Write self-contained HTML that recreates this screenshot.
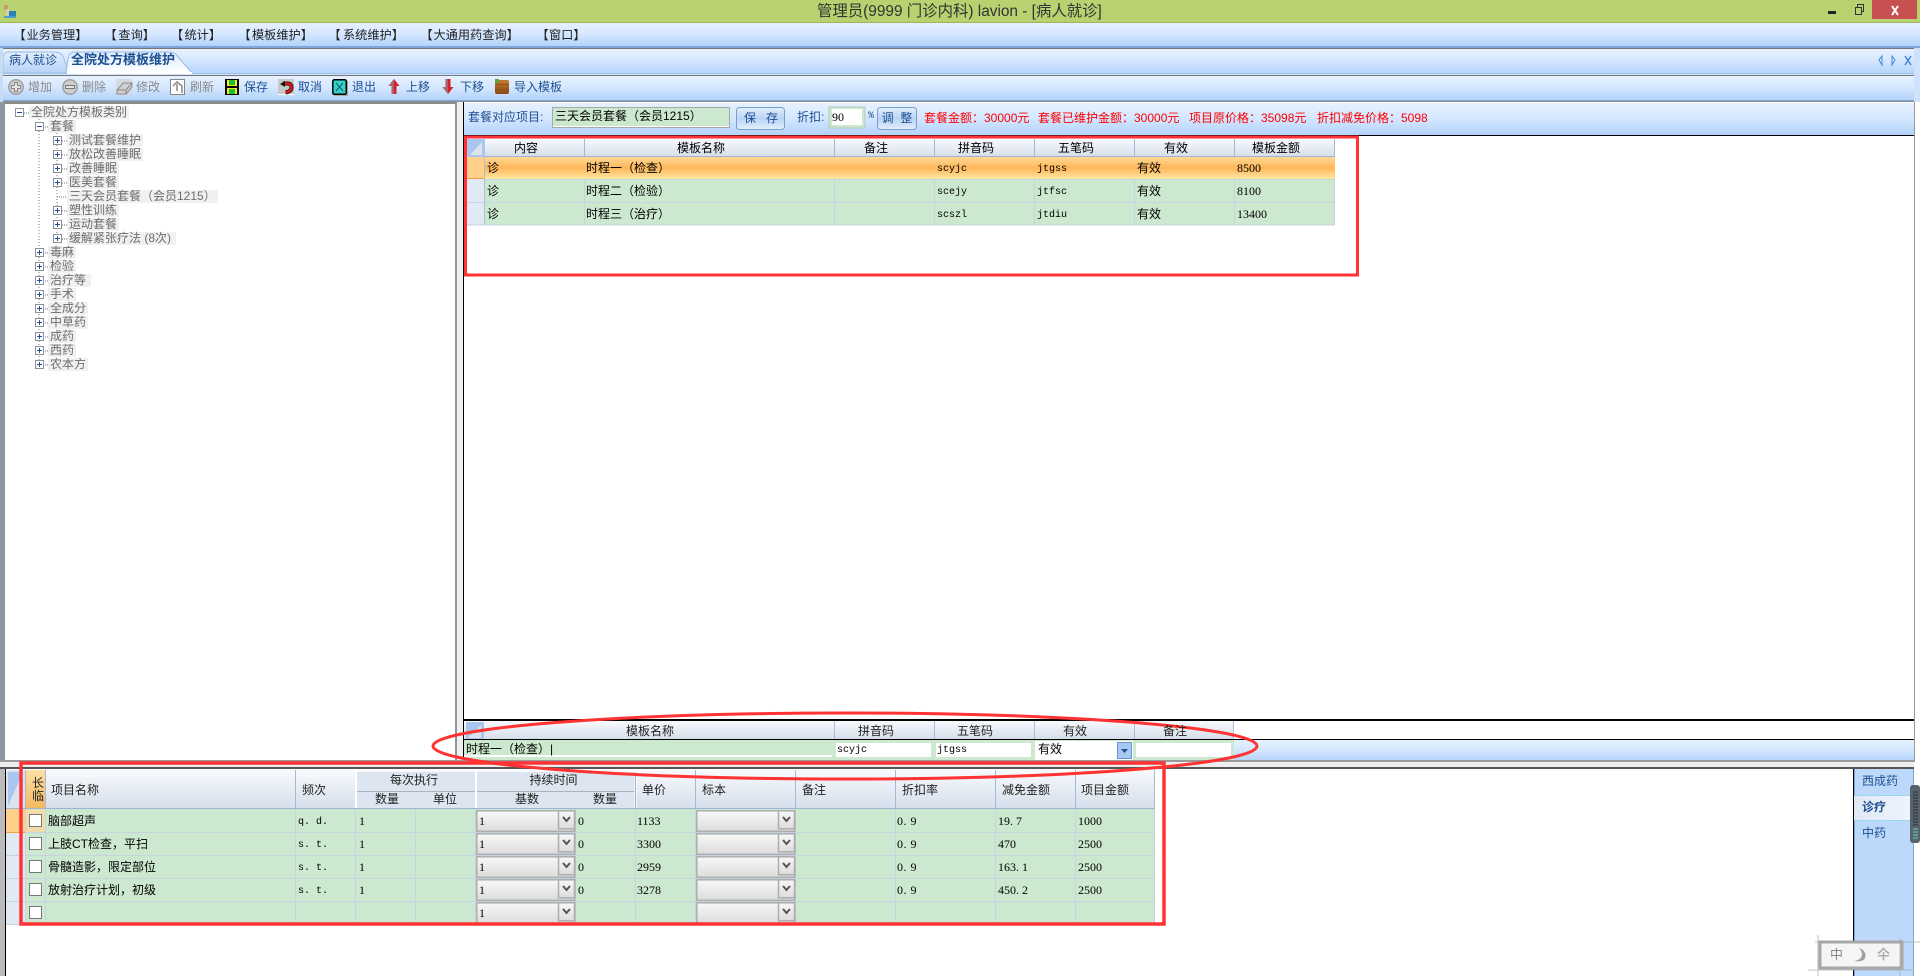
<!DOCTYPE html>
<html lang="zh"><head><meta charset="utf-8"><title>管理员</title>
<style>
html,body{margin:0;padding:0;width:1920px;height:976px;overflow:hidden;background:#fff}
svg{position:absolute;left:0;top:0}
.t{position:absolute;white-space:nowrap;font:12px/14px "Liberation Sans","WenQuanYi Zen Hei","Noto Sans CJK SC",sans-serif;color:#000}
.c{text-align:center}
.b{color:#1d4f91}.g{color:#8a8a8a}.r{color:#f00}.k{color:#222}
.l{color:#6e6e6e;background:#f0f0f0;padding:0 2px;line-height:13px}
.m{font:10px/14px "Liberation Mono",monospace}
.n{font:12px/14px "Liberation Serif",serif}
.mn{font-size:12.200px;top:28px}
</style></head><body>
<svg width="1920" height="976" viewBox="0 0 1920 976">
<defs>
<linearGradient id="bar" x1="0" y1="0" x2="0" y2="1"><stop offset="0" stop-color="#e6f1ff"/><stop offset=".45" stop-color="#d6e8ff"/><stop offset="1" stop-color="#b3d3fb"/></linearGradient>
<linearGradient id="hdr" x1="0" y1="0" x2="0" y2="1"><stop offset="0" stop-color="#f8fafc"/><stop offset="1" stop-color="#d5deeb"/></linearGradient>
<linearGradient id="sel" x1="0" y1="0" x2="0" y2="1"><stop offset="0" stop-color="#fdd995"/><stop offset=".5" stop-color="#ffb65a"/><stop offset="1" stop-color="#ffe8a2"/></linearGradient>
<linearGradient id="org" x1="0" y1="0" x2="0" y2="1"><stop offset="0" stop-color="#fde0a4"/><stop offset="1" stop-color="#f3b95f"/></linearGradient>
<linearGradient id="cmb" x1="0" y1="0" x2="0" y2="1"><stop offset="0" stop-color="#f8f8f8"/><stop offset="1" stop-color="#dcdcdc"/></linearGradient>
<linearGradient id="btn" x1="0" y1="0" x2="0" y2="1"><stop offset="0" stop-color="#e4effd"/><stop offset=".5" stop-color="#b8d4f6"/><stop offset="1" stop-color="#e4effd"/></linearGradient>
<linearGradient id="tabA" x1="0" y1="0" x2="0" y2="1"><stop offset="0" stop-color="#dcebff"/><stop offset="1" stop-color="#fff"/></linearGradient>
<linearGradient id="tabI" x1="0" y1="0" x2="0" y2="1"><stop offset="0" stop-color="#e3eefc"/><stop offset="1" stop-color="#b6d3f8"/></linearGradient>
<linearGradient id="act" x1="0" y1="0" x2="1" y2="0"><stop offset="0" stop-color="#dfe9f6"/><stop offset="1" stop-color="#eef4fc"/></linearGradient>
<linearGradient id="brn" x1="0" y1="0" x2="0" y2="1"><stop offset="0" stop-color="#c77a2c"/><stop offset="1" stop-color="#8a4a16"/></linearGradient>
</defs>
<!-- title -->
<rect width="1920" height="22" fill="#b8d26f"/><rect y="22" width="1920" height="1" fill="#9db55c"/>
<rect x="1872" width="45" height="19" fill="#c75050"/>
<rect x="1828" y="11" width="8" height="3" fill="#222"/>
<path d="M1855.500 7.500h6v7h-6zM1857.500 7v-2.500h6v7h-2" fill="none" stroke="#333"/>
<path d="M1892 6l6 9M1898 6l-6 9" stroke="#fff" stroke-width="2"/>
<rect x="4" y="5" width="4" height="5" fill="#c89a70"/><rect x="6" y="9" width="3" height="8" fill="#e0c8b0"/><rect x="9" y="11" width="7" height="6" fill="#2a7fb5"/><rect x="4" y="16" width="12" height="2" fill="#4aa0c8"/>
<!-- menu -->
<rect y="23" width="1920" height="23" fill="url(#bar)"/><rect y="46" width="1920" height="2" fill="#7ea7d8"/>
<!-- tabs strip -->
<rect y="48" width="1920" height="54" fill="#cfe2fb"/>
<rect x="1" y="48" width="1913" height="1" fill="#777"/>
<rect x="2" y="49" width="1912" height="25" fill="url(#bar)"/>
<path d="M3 73V58q0-6 6-6h46q5 0 8 4l6 17z" fill="url(#tabI)" stroke="#9dbbe0"/>
<path d="M66 73l2-14q1-7 7-7h95q5 0 8 5l14 16z" fill="url(#tabA)" stroke="#9dbbe0"/>
<rect x="2" y="73" width="1912" height="1" fill="#a5c3e8"/>
<rect x="67" y="72" width="125" height="2" fill="#fff"/>
<path d="M1882 56l-3 4 3 5zM1892 56l3 4-3 5z" fill="none" stroke="#3f87d6"/>
<path d="M1905 56l6 9M1911 56l-6 9" stroke="#3f87d6" stroke-width="1.500"/>
<!-- toolbar -->
<rect x="3" y="75" width="1911" height="1" fill="#777"/>
<rect x="3" y="76" width="1911" height="24" fill="url(#bar)"/>
<rect x="3" y="100" width="1911" height="1" fill="#7ea7d8"/><rect x="3" y="101" width="1911" height="1" fill="#8e8e8e"/>
<rect x="0" y="48" width="3" height="54" fill="#c8dcf6"/>
<g>
<circle cx="16" cy="87" r="7.200" fill="#cfcfcf" stroke="#a0a0a0" stroke-width="1.500"/><path d="M14.500 82.500h3v3h3v3h-3v3h-3v-3h-3v-3h3z" fill="#e4e4e4" stroke="#888"/>
<circle cx="70" cy="87" r="7.200" fill="#cfcfcf" stroke="#a0a0a0" stroke-width="1.500"/><rect x="65.500" y="85.500" width="9" height="3" fill="#e4e4e4" stroke="#777"/>
<rect x="116" y="79" width="16" height="16" fill="#d3d9e1"/><path d="M117 94v-4l6-7h9v4l-6 7z" fill="#cfcfcf" stroke="#888"/><path d="M117 90h9l6-7M126 90v4" fill="none" stroke="#888"/>
<rect x="170.500" y="79.500" width="14" height="15" fill="#fff" stroke="#888"/><path d="M173 86l4-4 5 4v7M177 84v7" fill="none" stroke="#888" stroke-width="1.500"/>
<rect x="225" y="79" width="14" height="16" fill="#000"/><rect x="227" y="80" width="10" height="14" fill="#f6f01e"/><rect x="229" y="80" width="6" height="5" fill="#1fbb3c"/><rect x="229" y="89" width="6" height="5" fill="#1fbb3c"/><rect x="227" y="86" width="10" height="2" fill="#000"/>
<rect x="278" y="79" width="16" height="15" fill="#c9c9c9"/><rect x="278" y="94" width="16" height="1" fill="#fff"/><path d="M283 83.500h4q4.500 0 4.500 4t-6 5" fill="none" stroke="#111" stroke-width="4"/><path d="M283 83.500h4q4.500 0 4.500 4t-6 5" fill="none" stroke="#e0161d" stroke-width="2.500"/><path d="M280 84l5-3v6z" fill="#111"/>
<rect x="334" y="81" width="14" height="15" fill="#aaa"/><rect x="332.800" y="79.800" width="13.500" height="14.500" rx="1.500" fill="#36d2c9" stroke="#000" stroke-width="1.500"/><path d="M336 83l7 8M343 83l-7 8" stroke="#0b5a6a"/>
<path d="M394 79l5.500 7h-3v8h-5v-8h-3z" fill="#cf2229"/><path d="M394 79l-5.500 7h3v8h2.500z" fill="#a9646a"/>
<path d="M448 94l5.500-7h-3v-8h-5v8h-3z" fill="#cf2229"/><path d="M448 94l-5.500-7h3v-8h2.500z" fill="#a9646a"/>
<rect x="495" y="80" width="14" height="14" rx="2" fill="url(#brn)"/><rect x="495" y="84" width="14" height="1" fill="#7a4215" opacity=".6"/><rect x="495" y="89" width="14" height="1" fill="#7a4215" opacity=".6"/><rect x="495" y="79" width="4" height="4" fill="#53a83a"/>
</g>
<!-- tree panel -->
<rect x="0" y="102" width="5" height="660" fill="#8d96a3"/>
<rect x="5" y="102" width="450" height="2" fill="#8a8a8a"/>
<rect x="455" y="102" width="2" height="660" fill="#8f95a0"/><rect x="457" y="102" width="6" height="660" fill="#efefef"/>
<path d="M39 119V365M57 133V225" stroke="#777" stroke-dasharray="1 2" fill="none"/>
<path d="M24 113h5M43 127h5M43 253h5M43 267h5M43 281h5M43 295h5M43 309h5M43 323h5M43 337h5M43 351h5M43 365h5M62 141h6M62 155h6M62 169h6M62 183h6M57 197h11M62 211h6M62 225h6M62 239h6" stroke="#777" stroke-dasharray="1 1" fill="none"/>
<path d="M57 232v7" stroke="#777" stroke-dasharray="1 2"/>
<g fill="#fff" stroke="#8b8f98">
<rect x="15.500" y="108.500" width="8" height="8"/><rect x="35.500" y="122.500" width="8" height="8"/>
<rect x="53.500" y="136.500" width="8" height="8"/><rect x="53.500" y="150.500" width="8" height="8"/><rect x="53.500" y="164.500" width="8" height="8"/><rect x="53.500" y="178.500" width="8" height="8"/><rect x="53.500" y="206.500" width="8" height="8"/><rect x="53.500" y="220.500" width="8" height="8"/><rect x="53.500" y="234.500" width="8" height="8"/>
<rect x="35.500" y="248.500" width="8" height="8"/><rect x="35.500" y="262.500" width="8" height="8"/><rect x="35.500" y="276.500" width="8" height="8"/><rect x="35.500" y="290.500" width="8" height="8"/><rect x="35.500" y="304.500" width="8" height="8"/><rect x="35.500" y="318.500" width="8" height="8"/><rect x="35.500" y="332.500" width="8" height="8"/><rect x="35.500" y="346.500" width="8" height="8"/><rect x="35.500" y="360.500" width="8" height="8"/>
</g>
<path d="M17 112.500h5M37 126.500h5M55 140.500h5M57.500 138v5M55 154.500h5M57.500 152v5M55 168.500h5M57.500 166v5M55 182.500h5M57.500 180v5M55 210.500h5M57.500 208v5M55 224.500h5M57.500 222v5M55 238.500h5M57.500 236v5M37 252.500h5M39.500 250v5M37 266.500h5M39.500 264v5M37 280.500h5M39.500 278v5M37 294.500h5M39.500 292v5M37 308.500h5M39.500 306v5M37 322.500h5M39.500 320v5M37 336.500h5M39.500 334v5M37 350.500h5M39.500 348v5M37 364.500h5M39.500 362v5" stroke="#2c4a9a" fill="none"/>
<!-- right panel -->
<rect x="463" y="102" width="1" height="660" fill="#000"/>
<rect x="1914" y="102" width="1" height="660" fill="#9a9a9a"/>
<rect x="464" y="103" width="1450" height="32" fill="url(#bar)"/><rect x="464" y="135" width="1450" height="1" fill="#000"/>
<rect x="552.500" y="107.500" width="177" height="20" fill="#cce8cf" stroke="#a8a8a8"/><rect x="553" y="126" width="176" height="1" fill="#fff"/>
<rect x="736.500" y="107.500" width="48" height="22" rx="3" fill="url(#btn)" stroke="#7d9ec8"/>
<rect x="829" y="107" width="36" height="21" fill="#cce8cf" stroke="#b8c8b8"/><rect x="832" y="109" width="30" height="16" fill="#fff"/>
<rect x="877.500" y="107.500" width="39" height="22" rx="3" fill="url(#btn)" stroke="#7d9ec8"/>
<!-- top grid -->
<rect x="467" y="139" width="868" height="18" fill="url(#hdr)"/><rect x="467" y="156" width="868" height="1" fill="#9db4d2"/>
<rect x="467" y="139" width="18" height="18" fill="#a9c6ee"/><path d="M470 155l12-13v13z" fill="#dde3ea"/>
<rect x="485" y="179" width="850" height="46" fill="#cce8cf"/>
<path d="M584.500 179v46M834.500 179v46M934.500 179v46M1034.500 179v46M1134.500 179v46M1234.500 179v46M1334.500 179v46" stroke="#c6d3e2"/>
<rect x="485" y="157" width="850" height="22" fill="url(#sel)"/>
<rect x="467" y="157" width="18" height="22" fill="#ffd08a"/><rect x="467" y="179" width="18" height="46" fill="#e1e9f5"/>
<path d="M467 178.500h18" stroke="#f0a33d"/><path d="M484.500 157v68" stroke="#a9bfdc"/>
<path d="M485 179.500h850M485 202.500h850M467 225h868M467 202.500h18" stroke="#c6d3e2"/>
<path d="M584.500 139v18M834.500 139v18M934.500 139v18M1034.500 139v18M1134.500 139v18M1234.500 139v18M1334.500 139v18" stroke="#a3b9d5"/>
<!-- edit grid -->
<rect x="464" y="719" width="1450" height="2" fill="#000"/>
<rect x="464" y="721" width="770" height="18" fill="url(#hdr)"/>
<rect x="466" y="722" width="18" height="17" fill="#a9c6ee"/><path d="M468 738l13-13v13z" fill="#dde3ea"/>
<path d="M834.500 721v18M934.500 721v18M1034.500 721v18M1134.500 721v18M1233.500 721v18" stroke="#a9bdd7"/>
<rect x="464" y="739" width="1450" height="1" fill="#000"/>
<rect x="464" y="740" width="1450" height="21" fill="url(#bar)"/>
<rect x="464" y="740" width="770" height="21" fill="#cce8cf"/>
<rect x="464" y="755" width="368" height="2" fill="#fff"/>
<rect x="836" y="743" width="95" height="14" fill="#fff"/><rect x="936" y="743" width="95" height="14" fill="#fff"/>
<rect x="1035" y="741" width="98" height="19" fill="#fff"/><rect x="1117.500" y="742.500" width="14" height="16" fill="#a7c8f2" stroke="#6a90c8"/><path d="M1121 749h7l-3.500 4z" fill="#1d4f91"/>
<rect x="1136" y="743" width="95" height="14" fill="#fff"/>
<!-- splitter -->
<rect x="0" y="760" width="1914" height="2" fill="#9a9a9a"/><rect x="0" y="762" width="1914" height="6" fill="#eee"/><rect x="0" y="767" width="1914" height="2" fill="#555"/>
<rect x="0" y="769" width="5" height="207" fill="#bbb"/><rect x="5" y="769" width="1" height="207" fill="#000"/>
<!-- bottom grid -->
<rect x="6" y="770" width="1149" height="39" fill="url(#hdr)"/>
<rect x="6" y="770" width="19" height="39" fill="#dde3ee"/><path d="M8 806V772h15z" fill="#a9c6ee"/>
<rect x="25" y="770" width="21" height="39" fill="url(#org)"/>
<rect x="357" y="772" width="118" height="36" fill="#dde5f0"/><rect x="477" y="772" width="158" height="36" fill="#dde5f0"/>
<path d="M357 791.500h118M477 791.500h158" stroke="#a8b4c4"/>
<path d="M356 770v39M476 770v39M635.500 770v39" stroke="#fff" stroke-width="2"/>
<rect x="6" y="808" width="1149" height="1" fill="#9db4d2"/>
<rect x="25" y="809" width="1130" height="116" fill="#cce8cf"/>
<rect x="6" y="809" width="19" height="116" fill="#e1e9f5"/>
<rect x="6" y="809" width="19" height="23" fill="#ffd08a"/><path d="M6 832.500h19" stroke="#f0a33d"/>
<rect x="25" y="809" width="21" height="23" fill="#fbd9a0" opacity=".8"/>
<path d="M25 832.500h1130M25 855.500h1130M25 878.500h1130M25 901.500h1130M6 924.500h1149M6 855.500h19M6 878.500h19M6 901.500h19" stroke="#c6d3e2"/>
<path d="M25.500 809v116M45.500 809v116M295.500 809v116M355.500 809v116M415.500 809v116M475.500 809v116M575.500 809v116M635.500 809v116M695.500 809v116M795.500 809v116M895.500 809v116M995.500 809v116M1075.500 809v116M1154.500 809v116" stroke="#c6d3e2"/>
<path d="M25.500 770v39M45.500 770v39M295.500 770v39M635.500 772v37M695.500 770v39M795.500 770v39M895.500 770v39M995.500 770v39M1075.500 770v39M1154.500 770v39" stroke="#a3b9d5"/>
<g fill="#fff" stroke="#777"><rect x="29.500" y="814.500" width="12" height="12"/><rect x="29.500" y="837.500" width="12" height="12"/><rect x="29.500" y="860.500" width="12" height="12"/><rect x="29.500" y="883.500" width="12" height="12"/><rect x="29.500" y="906.500" width="12" height="12"/></g>
<g fill="url(#cmb)" stroke="#adadad" stroke-width="1.500">
<rect x="476.800" y="810.800" width="98" height="20.500"/><rect x="476.800" y="833.800" width="98" height="20.500"/><rect x="476.800" y="856.800" width="98" height="20.500"/><rect x="476.800" y="879.800" width="98" height="20.500"/><rect x="476.800" y="902.800" width="98" height="20.500"/>
<rect x="558.500" y="810.800" width="16" height="18"/><rect x="558.500" y="833.800" width="16" height="18"/><rect x="558.500" y="856.800" width="16" height="18"/><rect x="558.500" y="879.800" width="16" height="18"/><rect x="558.500" y="902.800" width="16" height="18"/>
<rect x="696.800" y="810.800" width="98" height="20.500"/><rect x="696.800" y="833.800" width="98" height="20.500"/><rect x="696.800" y="856.800" width="98" height="20.500"/><rect x="696.800" y="879.800" width="98" height="20.500"/><rect x="696.800" y="902.800" width="98" height="20.500"/>
<rect x="778.500" y="810.800" width="16" height="18"/><rect x="778.500" y="833.800" width="16" height="18"/><rect x="778.500" y="856.800" width="16" height="18"/><rect x="778.500" y="879.800" width="16" height="18"/><rect x="778.500" y="902.800" width="16" height="18"/>
</g>
<path d="M563 817l3.500 4 3.500-4M563 840l3.500 4 3.500-4M563 863l3.500 4 3.500-4M563 886l3.500 4 3.500-4M563 909l3.500 4 3.500-4M783 817l3.500 4 3.500-4M783 840l3.500 4 3.500-4M783 863l3.500 4 3.500-4M783 886l3.500 4 3.500-4M783 909l3.500 4 3.500-4" fill="none" stroke="#555" stroke-width="2"/>
<!-- side tabs -->
<rect x="1853" y="769" width="1" height="207" fill="#000"/>
<rect x="1854" y="769" width="59" height="207" fill="#bcd9fc"/><rect x="1913" y="769" width="1" height="207" fill="#7ea7d8"/>
<rect x="1854" y="769" width="1" height="207" fill="#7ea7d8"/>
<rect x="1854" y="795" width="59" height="25" fill="url(#act)"/><path d="M1854 795.500h59M1854 820.500h59" stroke="#9fd4f2"/>
<rect x="1910" y="785" width="10" height="58" rx="3" fill="#59616c"/>
<path d="M1913 792h5M1913 795h5M1913 798h5M1913 801h5M1913 804h5M1913 807h5M1913 810h5M1913 813h5M1913 816h5M1913 819h5M1913 822h5M1913 825h5" stroke="#2c3138"/>
<path d="M1913 829h5M1913 832h5M1913 835h5M1913 838h5" stroke="#52e0b0"/>
<!-- IME -->
<rect x="1820" y="942" width="82" height="26" fill="#f5f5f5" stroke="#a8a8a8" stroke-width="3"/>
<path d="M1808 970h105M1815 942h105M1818 935v41M1900 938v38" stroke="#a5a5a5" stroke-opacity=".7"/>
<path d="M1859 948c5 5 4 12-5 13 5 1 10 0 11-3 2-5-2-9-6-10z" fill="#a0a0a0"/>
<!-- annotations -->
<rect x="465.500" y="137" width="892" height="138" fill="none" stroke="#f33" stroke-width="3"/>
<ellipse cx="845" cy="746" rx="412" ry="33" fill="none" stroke="#f33" stroke-width="3"/>
<rect x="21" y="763" width="1143" height="161" fill="none" stroke="#f33" stroke-width="3.500"/>
</svg>

<div class="t" style="left:817px;top:3px;font-size:15.400px;line-height:18px;color:#333">管理员(9999 门诊内科) lavion - [病人就诊]</div>
<div class="t k mn" style="left:13.500px">【</div><div class="t k mn" style="left:26.500px">业务管理】</div>
<div class="t k mn" style="left:104.500px">【</div><div class="t k mn" style="left:118.400px">查询】</div>
<div class="t k mn" style="left:171px">【</div><div class="t k mn" style="left:184.500px">统计】</div>
<div class="t k mn" style="left:238.500px">【</div><div class="t k mn" style="left:252px">模板维护】</div>
<div class="t k mn" style="left:328.500px">【</div><div class="t k mn" style="left:343px">系统维护】</div>
<div class="t k mn" style="left:420.500px">【</div><div class="t k mn" style="left:433.500px">大通用药查询】</div>
<div class="t k mn" style="left:536.500px">【</div><div class="t k mn" style="left:549px">窗口】</div>
<div class="t b" style="left:9px;top:53px">病人就诊</div>
<div class="t b" style="left:71px;top:53px;font-weight:bold;font-size:13px">全院处方模板维护</div>
<div class="t g" style="left:28px;top:80px">增加</div><div class="t g" style="left:82px;top:80px">删除</div><div class="t g" style="left:136px;top:80px">修改</div><div class="t g" style="left:190px;top:80px">刷新</div>
<div class="t b" style="left:244px;top:80px">保存</div><div class="t b" style="left:298px;top:80px">取消</div><div class="t b" style="left:352px;top:80px">退出</div><div class="t b" style="left:406px;top:80px">上移</div><div class="t b" style="left:460px;top:80px">下移</div><div class="t b" style="left:514px;top:80px">导入模板</div>

<div class="t l" style="left:29px;top:106px">全院处方模板类别</div>
<div class="t l" style="left:48px;top:120px">套餐</div>
<div class="t l" style="left:67px;top:134px">测试套餐维护</div>
<div class="t l" style="left:67px;top:148px">放松改善睡眠</div>
<div class="t l" style="left:67px;top:162px">改善睡眠</div>
<div class="t l" style="left:67px;top:176px">医美套餐</div>
<div class="t l" style="left:67px;top:190px">三天会员套餐（会员1215）</div>
<div class="t l" style="left:67px;top:204px">塑性训练</div>
<div class="t l" style="left:67px;top:218px">运动套餐</div>
<div class="t l" style="left:67px;top:232px">缓解紧张疗法 (8次)&nbsp;</div>
<div class="t l" style="left:48px;top:246px">毒麻</div>
<div class="t l" style="left:48px;top:260px">检验</div>
<div class="t l" style="left:48px;top:274px">治疗等&nbsp;</div>
<div class="t l" style="left:48px;top:288px">手术</div>
<div class="t l" style="left:48px;top:302px">全成分</div>
<div class="t l" style="left:48px;top:316px">中草药</div>
<div class="t l" style="left:48px;top:330px">成药</div>
<div class="t l" style="left:48px;top:344px">西药</div>
<div class="t l" style="left:48px;top:358px">农本方</div>

<div class="t b" style="left:468px;top:110px">套餐对应项目:</div>
<div class="t" style="left:555px;top:109px">三天会员套餐（会员1215）</div>
<div class="t c b" style="left:737px;top:111px;width:48px">保&nbsp;&nbsp;&nbsp;存</div>
<div class="t b" style="left:797px;top:110px">折扣:</div>
<div class="t n" style="left:832px;top:110px">90</div>
<div class="t b m" style="left:868px;top:110px">%</div>
<div class="t c b" style="left:877px;top:111px;width:40px">调&nbsp;&nbsp;整</div>
<div class="t r" style="left:924px;top:111px">套餐金额：30000元</div>
<div class="t r" style="left:1038px;top:111px">套餐已维护金额：30000元</div>
<div class="t r" style="left:1189px;top:111px">项目原价格：35098元</div>
<div class="t r" style="left:1317px;top:111px">折扣减免价格：5098</div>

<div class="t c" style="left:476px;top:141px;width:100px">内容</div><div class="t c" style="left:576px;top:141px;width:250px">模板名称</div><div class="t c" style="left:826px;top:141px;width:100px">备注</div><div class="t c" style="left:926px;top:141px;width:100px">拼音码</div><div class="t c" style="left:1026px;top:141px;width:100px">五笔码</div><div class="t c" style="left:1126px;top:141px;width:100px">有效</div><div class="t c" style="left:1226px;top:141px;width:100px">模板金额</div>
<div class="t" style="left:487px;top:161px">诊</div><div class="t" style="left:586px;top:161px">时程一（检查）</div><div class="t m" style="left:937px;top:163px">scyjc</div><div class="t m" style="left:1037px;top:163px">jtgss</div><div class="t" style="left:1137px;top:161px">有效</div><div class="t n" style="left:1237px;top:161px">8500</div>
<div class="t" style="left:487px;top:184px">诊</div><div class="t" style="left:586px;top:184px">时程二（检验）</div><div class="t m" style="left:937px;top:186px">scejy</div><div class="t m" style="left:1037px;top:186px">jtfsc</div><div class="t" style="left:1137px;top:184px">有效</div><div class="t n" style="left:1237px;top:184px">8100</div>
<div class="t" style="left:487px;top:207px">诊</div><div class="t" style="left:586px;top:207px">时程三（治疗）</div><div class="t m" style="left:937px;top:209px">scszl</div><div class="t m" style="left:1037px;top:209px">jtdiu</div><div class="t" style="left:1137px;top:207px">有效</div><div class="t n" style="left:1237px;top:207px">13400</div>

<div class="t c k" style="left:475px;top:724px;width:350px">模板名称</div><div class="t c k" style="left:826px;top:724px;width:100px">拼音码</div><div class="t c k" style="left:925px;top:724px;width:100px">五笔码</div><div class="t c k" style="left:1025px;top:724px;width:100px">有效</div><div class="t c k" style="left:1125px;top:724px;width:100px">备注</div>
<div class="t" style="left:466px;top:742px">时程一（检查）|</div><div class="t m" style="left:837px;top:744px">scyjc</div><div class="t m" style="left:937px;top:744px">jtgss</div><div class="t" style="left:1038px;top:742px">有效</div>

<div class="t k" style="left:32px;top:777px;width:12px;line-height:13px;white-space:normal">长临</div>
<div class="t k" style="left:51px;top:783px">项目名称</div><div class="t k" style="left:302px;top:783px">频次</div>
<div class="t c k" style="left:356px;top:773px;width:116px">每次执行</div><div class="t c k" style="left:475px;top:773px;width:157px">持续时间</div>
<div class="t c k" style="left:357px;top:792px;width:60px">数量</div><div class="t c k" style="left:415px;top:792px;width:60px">单位</div><div class="t c k" style="left:477px;top:792px;width:100px">基数</div><div class="t c k" style="left:575px;top:792px;width:60px">数量</div>
<div class="t k" style="left:642px;top:783px">单价</div><div class="t k" style="left:702px;top:783px">标本</div><div class="t k" style="left:802px;top:783px">备注</div><div class="t k" style="left:902px;top:783px">折扣率</div><div class="t k" style="left:1002px;top:783px">减免金额</div><div class="t k" style="left:1081px;top:783px">项目金额</div>

<div class="t" style="left:48px;top:814px">脑部超声</div><div class="t m" style="left:298px;top:816px">q. d.</div><div class="t n" style="left:359px;top:814px">1</div><div class="t n" style="left:479px;top:814px">1</div><div class="t n" style="left:578px;top:814px">0</div><div class="t n" style="left:637px;top:814px">1133</div><div class="t n" style="left:897px;top:814px;letter-spacing:.5px">0. 9</div><div class="t n" style="left:998px;top:814px">19. 7</div><div class="t n" style="left:1078px;top:814px">1000</div>
<div class="t" style="left:48px;top:837px">上肢CT检查，平扫</div><div class="t m" style="left:298px;top:839px">s. t.</div><div class="t n" style="left:359px;top:837px">1</div><div class="t n" style="left:479px;top:837px">1</div><div class="t n" style="left:578px;top:837px">0</div><div class="t n" style="left:637px;top:837px">3300</div><div class="t n" style="left:897px;top:837px;letter-spacing:.5px">0. 9</div><div class="t n" style="left:998px;top:837px">470</div><div class="t n" style="left:1078px;top:837px">2500</div>
<div class="t" style="left:48px;top:860px">骨髓造影，限定部位</div><div class="t m" style="left:298px;top:862px">s. t.</div><div class="t n" style="left:359px;top:860px">1</div><div class="t n" style="left:479px;top:860px">1</div><div class="t n" style="left:578px;top:860px">0</div><div class="t n" style="left:637px;top:860px">2959</div><div class="t n" style="left:897px;top:860px;letter-spacing:.5px">0. 9</div><div class="t n" style="left:998px;top:860px">163. 1</div><div class="t n" style="left:1078px;top:860px">2500</div>
<div class="t" style="left:48px;top:883px">放射治疗计划，初级</div><div class="t m" style="left:298px;top:885px">s. t.</div><div class="t n" style="left:359px;top:883px">1</div><div class="t n" style="left:479px;top:883px">1</div><div class="t n" style="left:578px;top:883px">0</div><div class="t n" style="left:637px;top:883px">3278</div><div class="t n" style="left:897px;top:883px;letter-spacing:.5px">0. 9</div><div class="t n" style="left:998px;top:883px">450. 2</div><div class="t n" style="left:1078px;top:883px">2500</div>
<div class="t n" style="left:479px;top:906px">1</div>

<div class="t b" style="left:1862px;top:774px">西成药</div>
<div class="t b" style="left:1862px;top:800px;font-weight:bold">诊疗</div>
<div class="t b" style="left:1862px;top:826px">中药</div>
<div class="t" style="left:1830px;top:948px;color:#888;font-size:13px">中</div>
<div class="t" style="left:1877px;top:948px;color:#aaa;font-size:13px;font-weight:bold">仐</div>
</body></html>
